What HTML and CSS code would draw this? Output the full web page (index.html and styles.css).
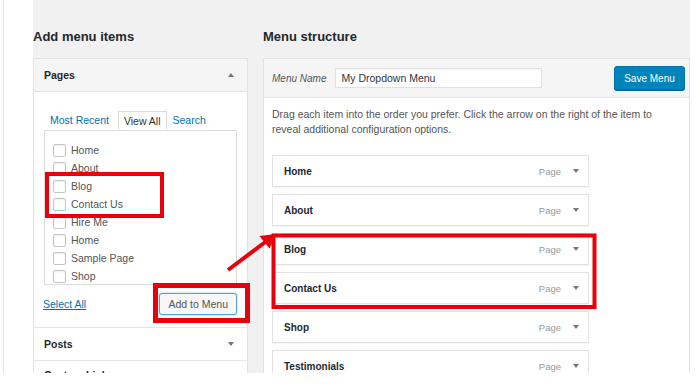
FILE: index.html
```html
<!DOCTYPE html>
<html lang="en">
<head>
<meta charset="utf-8">
<title>Menus</title>
<link rel="stylesheet" href="styles.css">
</head>
<body>
<div class="screen">
  <div class="gutter"></div>
  <div class="wpcontent">
    <div class="col col-left">
      <h3 class="col-title">Add menu items</h3>
      <div class="accordion">
        <div class="section">
          <div class="section-head">
            <span>Pages</span>
            <span class="tri tri-up"></span>
          </div>
          <div class="section-body">
            <ul class="tabs">
              <li class="tab tab-first"><a href="#">Most Recent</a></li>
              <li class="tab tab-active">View All</li>
              <li class="tab"><a href="#">Search</a></li>
            </ul>
            <div class="tabpanel">
              <ul class="checklist">
                <li><span class="cb"></span>Home</li>
                <li><span class="cb"></span>About</li>
                <li><span class="cb"></span>Blog</li>
                <li><span class="cb"></span>Contact Us</li>
                <li><span class="cb"></span>Hire Me</li>
                <li><span class="cb"></span>Home</li>
                <li><span class="cb"></span>Sample Page</li>
                <li><span class="cb"></span>Shop</li>
              </ul>
            </div>
            <div class="actions">
              <a href="#" class="select-all">Select All</a>
              <button class="btn-add" type="button">Add to Menu</button>
            </div>
          </div>
        </div>
        <div class="section section-closed">
          <div class="section-head">
            <span>Posts</span>
            <span class="tri tri-down"></span>
          </div>
        </div>
        <div class="section section-closed">
          <div class="section-head section-head-last">
            <span>Custom Links</span>
            <span class="tri tri-down"></span>
          </div>
        </div>
      </div>
    </div>

    <div class="col col-right">
      <h3 class="col-title">Menu structure</h3>
      <div class="menu-box">
        <div class="menu-head">
          <label class="menu-name-label">Menu Name</label>
          <div class="menu-name-input">My Dropdown Menu</div>
          <button class="btn-save" type="button">Save Menu</button>
        </div>
        <div class="menu-body">
          <p class="desc">Drag each item into the order you prefer. Click the arrow on the right of the item to<br>reveal additional configuration options.</p>
          <ul class="menu-items">
            <li class="item"><span class="item-title">Home</span><span class="item-type">Page</span><span class="tri tri-down"></span></li>
            <li class="item"><span class="item-title">About</span><span class="item-type">Page</span><span class="tri tri-down"></span></li>
            <li class="item"><span class="item-title">Blog</span><span class="item-type">Page</span><span class="tri tri-down"></span></li>
            <li class="item"><span class="item-title">Contact Us</span><span class="item-type">Page</span><span class="tri tri-down"></span></li>
            <li class="item"><span class="item-title">Shop</span><span class="item-type">Page</span><span class="tri tri-down"></span></li>
            <li class="item"><span class="item-title">Testimonials</span><span class="item-type">Page</span><span class="tri tri-down"></span></li>
          </ul>
        </div>
      </div>
    </div>
  </div>

  <svg class="annotations" width="700" height="391" viewBox="0 0 700 391" aria-hidden="true">
    <rect x="47" y="174" width="115" height="42" fill="none" stroke="#e8000b" stroke-width="4"/>
    <rect x="155.5" y="285.5" width="92" height="35" fill="none" stroke="#e8000b" stroke-width="5"/>
    <rect x="273.5" y="235.5" width="321" height="71.5" fill="none" stroke="#e8000b" stroke-width="4"/>
    <line x1="228" y1="270" x2="266" y2="241.5" stroke="#e8000b" stroke-width="4"/>
    <polygon points="276,234 269.5,248.5 259.5,236" fill="#e8000b"/>
  </svg>
</div>
</body>
</html>
```

FILE: styles.css
```css
* { box-sizing: border-box; }

html, body {
  margin: 0;
  padding: 0;
  background: #fff;
}

body {
  font-family: "Liberation Sans", Arial, sans-serif;
  color: #444;
}

.screen {
  position: relative;
  width: 700px;
  height: 391px;
  display: flex;
  align-items: flex-start;
  padding-left: 3px;
  overflow: hidden;
}

.gutter {
  width: 30px;
  height: 374px;
  border-left: 1px solid #e2e2e2;
  background: #fff;
}

.wpcontent {
  width: 657px;
  height: 373px;
  background: #f1f1f1;
  overflow: hidden;
  display: flex;
  gap: 15px;
  align-items: flex-start;
}

.col-left { width: 215px; flex: none; }
.col-right { width: 427px; flex: none; }

.col-title {
  margin: 29px 0 13px;
  font-size: 13px;
  line-height: 16px;
  font-weight: bold;
  color: #23282d;
}

/* Accordion */
.accordion {
  border: 1px solid #e2e2e2;
  background: #fff;
}

.section-head {
  height: 32px;
  display: flex;
  align-items: center;
  justify-content: space-between;
  padding: 0 13px 0 10px;
  font-size: 10.5px;
  font-weight: bold;
  color: #23282d;
  background: #fff;
}

.section:first-child .section-head {
  background: #f5f5f5;
  border-bottom: 1px solid #e4e4e4;
  height: 33px;
}

.section-closed {
  border-top: 1px solid #e6e6e6;
}

.section-head-last {
  align-items: flex-start;
  padding-top: 8px;
}

.tri {
  display: inline-block;
  width: 0;
  height: 0;
  border-left: 3px solid transparent;
  border-right: 3px solid transparent;
}
.tri-up { border-bottom: 4px solid #72777c; }
.tri-down { border-top: 4px solid #72777c; }

.section-head-last .tri { margin-top: 4px; }

.section-body {
  padding: 19px 10px 12px;
}

.tabs {
  list-style: none;
  margin: 0;
  padding: 0;
  display: flex;
  font-size: 10.5px;
  line-height: 18px;
}

.tab { padding: 0 6px; height: 19px; }
.tab-first { margin-right: 3px; }
.tab a { color: #0073aa; text-decoration: none; }

.tab-active {
  position: relative;
  z-index: 1;
  padding: 0 5px;
  border: 1px solid #dcdcdc;
  border-bottom: 1px solid #fff;
  background: #fff;
  color: #333;
  margin-bottom: -1px;
}

.tabpanel {
  height: 155px;
  border: 1px solid #dcdcdc;
  padding: 10px 8px 0;
  overflow: hidden;
}

.checklist {
  list-style: none;
  margin: 0;
  padding: 0;
  font-size: 10.5px;
  color: #555;
}

.checklist li {
  height: 18px;
  display: flex;
  align-items: center;
  gap: 5px;
}

.cb {
  width: 13px;
  height: 13px;
  border: 1px solid #c3c6c9;
  border-radius: 2px;
  background: #fff;
  box-shadow: inset 0 1px 2px rgba(0,0,0,.07);
  flex: none;
}

.actions {
  margin-top: 8px;
  display: flex;
  align-items: center;
  justify-content: space-between;
}

.select-all {
  font-size: 10.5px;
  color: #0073aa;
  text-decoration: underline;
  margin-left: -1px;
}

.btn-add {
  height: 22px;
  padding: 0 8px;
  font-family: inherit;
  font-size: 10.5px;
  color: #555;
  background: #f7f7f7;
  border: 1px solid #5b9dd9;
  border-radius: 3px;
  box-shadow: 0 0 2px rgba(30,140,190,.6);
}

/* Menu structure */
.menu-box {
  border: 1px solid #e2e2e2;
  background: #fff;
}

.menu-head {
  height: 39px;
  display: flex;
  align-items: center;
  padding: 0 4px 0 8px;
  background: #f5f5f5;
  border-bottom: 1px solid #e4e4e4;
}

.menu-name-label {
  font-size: 10px;
  font-style: italic;
  color: #555;
  margin-right: 9px;
}

.menu-name-input {
  width: 207px;
  height: 20px;
  border: 1px solid #e0e0e0;
  background: #fff;
  font-size: 10.5px;
  line-height: 18px;
  color: #32373c;
  padding-left: 5px;
  box-shadow: inset 0 1px 2px rgba(0,0,0,.04);
}

.btn-save {
  margin-left: auto;
  width: 71px;
  height: 24px;
  padding: 0;
  font-family: inherit;
  font-size: 10px;
  color: #fff;
  background: #0085ba;
  border: 1px solid #0073aa;
  border-radius: 3px;
  box-shadow: 0 1px 0 #006799;
}

.menu-body {
  padding: 9px 8px 20px;
}

.desc {
  margin: 0 0 18px;
  font-size: 10.5px;
  line-height: 15px;
  color: #555;
}

.menu-items {
  list-style: none;
  margin: 0;
  padding: 0;
}

.item {
  width: 317px;
  height: 32px;
  margin-bottom: 7px;
  display: flex;
  align-items: center;
  padding: 0 9px 0 11px;
  border: 1px solid #e2e2e2;
  background: #fff;
  box-shadow: 0 1px 1px rgba(0,0,0,.04);
}

.item-title {
  font-size: 10px;
  font-weight: bold;
  color: #23282d;
}

.item-type {
  margin-left: auto;
  margin-right: 12px;
  font-size: 9.5px;
  color: #999;
}

.annotations {
  position: absolute;
  left: 0;
  top: 0;
  pointer-events: none;
}
```
